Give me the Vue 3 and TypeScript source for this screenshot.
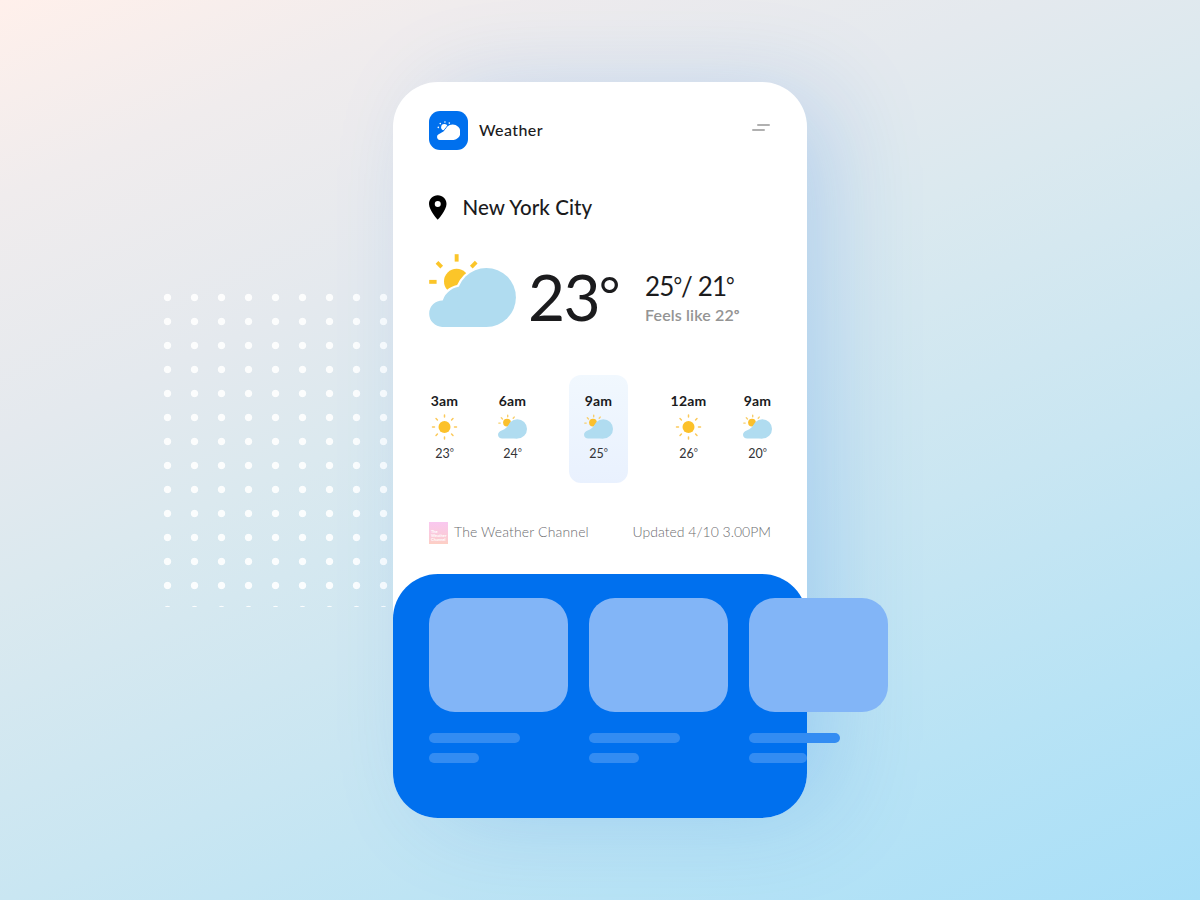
<script setup lang="ts">
interface Hour {
  time: string
  icon: 'sun' | 'partly'
  temp: number
  active?: boolean
}

const hours: Hour[] = [
  { time: '3am', icon: 'sun', temp: 23 },
  { time: '6am', icon: 'partly', temp: 24 },
  { time: '9am', icon: 'partly', temp: 25, active: true },
  { time: '12am', icon: 'sun', temp: 26 },
  { time: '9am', icon: 'partly', temp: 20 },
]

const sunRays = [0, 45, 90, 135, 180, 225, 270, 315]
const tiles = [1, 2, 3]

const smallCloud =
  'M4.2 23.6C1.8 23.6 0 22 0 19.7C0 17.3 1.8 16.2 4.2 15.2C7.4 13.9 8.9 12.4 10.4 10L19.3 13.9V23.6Z'
const largeCloud = 'M13.2 72.9A13.2 13.2 0 0 1 13.7 46.4A20 20 0 0 1 33.6 32.6L57.4 43.4V72.9Z'
</script>

<template>
  <main class="stage">
    <div class="dots"></div>
    <section class="phone">
      <div class="upper">
        <header class="header">
          <span class="logo">
            <svg class="logo-icon" viewBox="0 0 29 24">
              <g fill="#fff">
                <circle cx="9" cy="7.6" r="3.9" />
                <circle cx="1.6" cy="7.9" r="1" />
                <circle cx="4" cy="3.2" r="1" />
                <circle cx="9.8" cy="1.2" r="1" />
                <circle cx="15.2" cy="2.6" r="1" />
              </g>
              <g stroke="#0070ee" stroke-width="1.6">
                <path :d="smallCloud" />
                <circle cx="19.3" cy="13.9" r="9.7" />
              </g>
              <g fill="#fff">
                <path :d="smallCloud" />
                <circle cx="19.3" cy="13.9" r="9.7" />
              </g>
            </svg>
          </span>
          <span class="app-name">Weather</span>
          <span class="menu"><i></i><i></i></span>
        </header>

        <div class="place">
          <svg class="pin" viewBox="0 0 18 25">
            <path
              fill="#000" fill-rule="evenodd"
              d="M9 0C4 0 0 3.9 0 8.8C0 15.2 9 25 9 25S18 15.2 18 8.8C18 3.9 14 0 9 0ZM9 5.7A3.1 3.1 0 1 1 9 11.9A3.1 3.1 0 1 1 9 5.7Z"
            />
          </svg>
          <span class="city">New York City</span>
        </div>

        <div class="now">
          <svg class="now-icon" viewBox="0 0 87 73">
            <g fill="#fbc529">
              <circle cx="27.6" cy="27.4" r="12.6" />
              <rect x="25.7" y="0.2" width="3.9" height="7.4" />
              <rect x="0.2" y="25.9" width="7.4" height="3.9" />
            </g>
            <path d="M8 8.4L12.7 13.1M47.2 8.2L42.3 13.1" stroke="#fbc529" stroke-width="3.8" />
            <g stroke="#fff" stroke-width="4.4">
              <path :d="largeCloud" />
              <circle cx="57.4" cy="43.4" r="29.5" />
            </g>
            <g fill="#b0dcf0">
              <path :d="largeCloud" />
              <circle cx="57.4" cy="43.4" r="29.5" />
            </g>
          </svg>
          <span class="temp">23<span class="deg">°</span></span>
          <div class="range">
            <span class="high-low">25<span class="deg">°</span>/ 21<span class="deg">°</span></span>
            <span class="feels">Feels like 22<span class="deg">°</span></span>
          </div>
        </div>

        <div class="hours">
          <div v-for="(h, i) in hours" :key="i" class="hour" :class="{ active: h.active }">
            <span class="hour-time">{{ h.time }}</span>
            <svg v-if="h.icon === 'sun'" class="hour-icon" viewBox="0 0 26 26">
              <circle cx="13" cy="13" r="6" fill="#fcc12a" />
              <path
                v-for="r in sunRays" :key="r" d="M13 1V3" :transform="`rotate(${r} 13 13)`"
                stroke="#fbc95a" stroke-width="1.5" stroke-linecap="round"
              />
            </svg>
            <svg v-else class="hour-icon" viewBox="0 -1 29 26">
              <circle cx="9" cy="7.6" r="3.9" fill="#fbc02d" />
              <path
                d="M0.8 8.1H2.2M3.3 2.8L4.5 4M9.7 0.3V1.8M16.2 2.1L15.2 3.3"
                stroke="#f8cf6c" stroke-width="1.4" stroke-linecap="round"
              />
              <path :d="smallCloud" fill="#b0dcf0" />
              <circle cx="19.3" cy="13.9" r="9.7" fill="#b0dcf0" />
            </svg>
            <span class="hour-temp">{{ h.temp }}<span class="deg">°</span></span>
          </div>
        </div>

        <footer class="source">
          <span class="badge"><span>The</span><span>Weather</span><span>Channel</span></span>
          <span class="channel">The Weather Channel</span>
          <span class="updated">Updated 4/10 3.00PM</span>
        </footer>
      </div>

      <div class="panel">
        <div v-for="t in tiles" :key="t" class="tile">
          <div class="thumb"></div>
          <div class="bar"></div>
          <div class="bar short"></div>
        </div>
      </div>
    </section>
  </main>
</template>

<style>
body {
  margin: 0;
}
</style>

<style scoped>
.stage {
  position: relative;
  display: flex;
  align-items: center;
  justify-content: center;
  width: 1200px;
  height: 900px;
  overflow: hidden;
  font-family: Lato, "Open Sans", sans-serif;
  color: #1b1b1d;
  white-space: nowrap;
  background: linear-gradient(157deg, #fff0eb 0%, #f0eced 14%, #e4e9ee 31%, #dbe9ef 42%, #c9e6f2 64%, #b8e3f5 82%, #a8dff8 100%);
}
.dots {
  position: absolute;
  left: 154px;
  top: 286px;
  width: 239px;
  height: 320.5px;
  background: radial-gradient(circle at 13.5px 11.5px, rgba(255, 255, 255, 0.9) 3.3px, transparent 4.1px) 0 0 / 27px 24px;
}
.phone {
  position: relative;
  width: 414px;
  height: 736px;
  border-radius: 45px;
  background: #fff;
  box-shadow: 30px 4px 100px -14px rgba(30, 120, 230, 0.24);
}
.upper {
  box-sizing: border-box;
  height: 492px;
  padding: 29px 36px 0;
}
.header {
  display: flex;
  align-items: center;
  height: 39px;
}
.logo {
  display: flex;
  align-items: center;
  justify-content: center;
  width: 39px;
  height: 39px;
  border-radius: 11px;
  background: #0070ee;
}
.logo-icon {
  width: 23.5px;
  height: 19.4px;
}
.app-name {
  margin: 0 0 2px 11px;
  font-size: 16px;
  font-weight: 500;
  letter-spacing: 0.4px;
}
.menu {
  display: flex;
  flex-direction: column;
  gap: 3px;
  width: 18px;
  margin: 0 1px 7px auto;
}
.menu i {
  width: 13px;
  height: 2px;
  border-radius: 1px;
  background: #b0b0b0;
}
.menu i:first-child {
  align-self: flex-end;
}
.place {
  display: flex;
  align-items: center;
  height: 25px;
  margin-top: 45px;
}
.pin {
  width: 17.5px;
  height: 25px;
}
.city {
  margin: 0 0 2px 16px;
  font-size: 20.5px;
  font-weight: 500;
  letter-spacing: 0.1px;
}
.deg {
  font-size: 0.8em;
  line-height: 0;
  vertical-align: 0.16em;
}
.now {
  display: flex;
  height: 73px;
  margin-top: 34px;
}
.now-icon {
  width: 87px;
  height: 73px;
}
.temp {
  width: 118px;
  margin-left: 12px;
  font-size: 64px;
  line-height: 86px;
  letter-spacing: -1.6px;
}
.range {
  display: flex;
  flex-direction: column;
  margin-left: -1px;
}
.high-low {
  margin-top: 14px;
  font-size: 26px;
  line-height: 36px;
  letter-spacing: -0.9px;
}
.feels {
  font-size: 16px;
  font-weight: 600;
  line-height: 22px;
  letter-spacing: 0.15px;
  color: #949494;
}
.feels .deg {
  font-weight: 800;
}
.hours {
  display: grid;
  grid-template-columns: 65px 71px 101px 79px 59px;
  justify-items: center;
  margin: 48px -17px 0;
}
.hour {
  display: flex;
  flex-direction: column;
  align-items: center;
  box-sizing: border-box;
  width: 59px;
  height: 108px;
  padding-top: 16px;
  border-radius: 12px;
}
.hour.active {
  background: linear-gradient(#f1f8fe, #e9f1fe);
}
.hour-time {
  font-size: 14px;
  font-weight: 700;
  line-height: 19px;
  letter-spacing: 0.2px;
}
.hour-icon {
  width: 29px;
  height: 26px;
  margin-top: 4px;
}
.hour-temp {
  margin-top: 5px;
  font-size: 12.5px;
  line-height: 18px;
  color: #333336;
}
.source {
  display: flex;
  align-items: center;
  height: 22px;
  margin-top: 39px;
  font-size: 14px;
  font-weight: 300;
  color: #6c6c6f;
}
.badge {
  display: flex;
  flex-direction: column;
  justify-content: flex-end;
  box-sizing: border-box;
  width: 19px;
  height: 22px;
  padding: 0 0 2px 2px;
  font-size: 4px;
  font-weight: 700;
  line-height: 4px;
  color: #fff;
  background: linear-gradient(#f9c8f0, #fbcbd6 70%, #fdcfc4);
}
.channel {
  margin: 0 0 3px 6px;
  letter-spacing: 0.15px;
}
.updated {
  margin: 0 0 3px auto;
}
.panel {
  display: flex;
  gap: 21px;
  box-sizing: border-box;
  height: 244px;
  padding: 24px 36px 0;
  border-radius: 45px;
  background: #0070ee;
}
.tile {
  flex: none;
  width: 139px;
}
.thumb {
  height: 114px;
  margin-bottom: 21px;
  border-radius: 26px;
  background: #82b5f7;
}
.bar {
  width: 91px;
  height: 10px;
  margin-bottom: 10px;
  border-radius: 5px;
  background: #338cf2;
}
.bar.short {
  width: 50px;
}
.tile:last-child .short {
  width: 58px;
}
</style>
